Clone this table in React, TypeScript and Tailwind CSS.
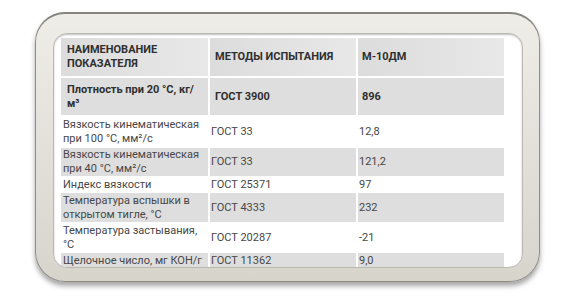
import React from "react";

type Row = { a: string; b: string; c: string; gray: boolean; bold?: boolean; h: string; top?: boolean };

const rows: Row[] = [
  { a: "Плотность при 20 °С, кг/м³", b: "ГОСТ 3900", c: "896", gray: true, bold: true, h: "h-[37px]" },
  { a: "Вязкость кинематическая при 100 °С, мм²/с", b: "ГОСТ 33", c: "12,8", gray: false, h: "h-[33px]" },
  { a: "Вязкость кинематическая при 40 °С, мм²/с", b: "ГОСТ 33", c: "121,2", gray: true, h: "h-[28px]" },
  { a: "Индекс вязкости", b: "ГОСТ 25371", c: "97", gray: false, h: "h-[17px]" },
  { a: "Температура вспышки в открытом тигле, °С", b: "ГОСТ 4333", c: "232", gray: true, h: "h-[29px]" },
  { a: "Температура застывания, °С", b: "ГОСТ 20287", c: "-21", gray: false, h: "h-[31px]" },
  { a: "Щелочное число, мг КОН/г", b: "ГОСТ 11362", c: "9,0", gray: true, h: "h-[28px]", top: true },
];

export default function App() {
  return (
    <div className="w-[581px] h-[300px] bg-white font-['Roboto',sans-serif] pt-[12px] pl-[35px]">
      <div className="w-[505px] h-[270px] rounded-[30px] border border-[#8e8d88] border-t-2 border-t-[#86857f] bg-gradient-to-b from-[#efede8] to-[#d7d4cc] shadow-[0_4px_5px_rgba(0,0,0,0.35)] pt-[19px] pl-[17px]">
        <div className="w-[470px] h-[235px] rounded-[14px] bg-white border border-[#b9b8b3] shadow-[inset_0_1px_2px_rgba(0,0,0,0.25)] overflow-hidden pt-[4px] pl-[7px]">
          <div className="flex flex-col w-[443px]">
            <div className="flex gap-[2px] h-[38px] text-[11px] leading-[14px] font-bold text-[#2f2f2f] uppercase">
              <div className="w-[147px] bg-gradient-to-r from-[#dcdcdc] to-[#e8e8e8] flex items-center px-[6px]">
                Наименование показателя
              </div>
              <div className="w-[146px] bg-gradient-to-r from-[#dcdcdc] to-[#e8e8e8] flex items-center px-[5px]">
                Методы испытания
              </div>
              <div className="w-[146px] bg-gradient-to-r from-[#dcdcdc] to-[#e8e8e8] flex items-center px-[4px]">
                М-10ДМ
              </div>
            </div>
            <div className="h-[2px]" />
            {rows.map((r, i) => (
              <div
                key={i}
                className={`flex gap-[2px] ${r.h} ${r.bold ? "font-bold text-[11px] text-[#2f2f2f]" : "text-[11px] text-[#474747]"} leading-[14px]`}
              >
                <div
                  className={`w-[147px] flex ${r.top ? "items-start pt-[1px]" : "items-center"} ${r.gray ? "bg-[#dedede]" : "bg-white"} ${r.bold ? "px-[6px]" : "px-[2px]"}`}
                >
                  {r.a}
                </div>
                <div
                  className={`w-[146px] flex ${r.top ? "items-start pt-[1px]" : "items-center"} ${r.gray ? "bg-[#dedede]" : "bg-white"} ${r.bold ? "px-[5px]" : "px-[1px]"}`}
                >
                  {r.b}
                </div>
                <div
                  className={`w-[146px] flex ${r.top ? "items-start pt-[1px]" : "items-center"} ${r.gray ? "bg-[#dedede]" : "bg-white"} ${r.bold ? "px-[4px]" : "px-[1px]"}`}
                >
                  {r.c}
                </div>
              </div>
            ))}
          </div>
        </div>
      </div>
    </div>
  );
}
